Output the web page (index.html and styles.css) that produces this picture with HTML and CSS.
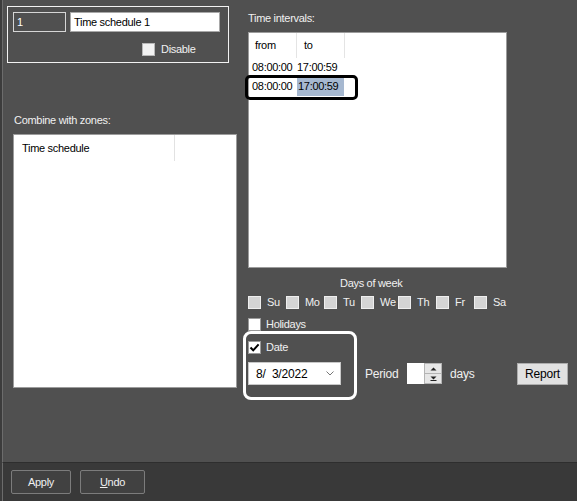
FILE: index.html
```html
<!DOCTYPE html>
<html>
<head>
<meta charset="utf-8">
<link rel="stylesheet" href="styles.css">
</head>
<body>
<div class="window">
  <div class="main">
    <div class="left">
      <div class="group">
        <div class="field-row">
          <div class="field id">1</div>
          <div class="field name">Time schedule 1</div>
        </div>
        <div class="check disable-row"><span class="box light"></span><span>Disable</span></div>
      </div>
      <div class="label combine-label">Combine with zones:</div>
      <div class="list zones">
        <div class="head">
          <div class="col zc1">Time schedule</div>
          <div class="col zc2"></div>
        </div>
      </div>
    </div>
    <div class="right">
      <div class="label">Time intervals:</div>
      <div class="list intervals">
        <div class="trow head">
          <div class="cell c1 hd">from</div>
          <div class="cell c2 hd">to</div>
        </div>
        <div class="trow">
          <div class="cell c1">08:00:00</div>
          <div class="cell c2">17:00:59</div>
        </div>
        <div class="trow">
          <div class="cell c1">08:00:00</div>
          <div class="cell c2"><span class="sel">17:00:59</span></div>
        </div>
        <div class="annot-black"></div>
      </div>
      <div class="dow-title">Days of week</div>
      <div class="days">
        <div class="check"><span class="box dis"></span><span>Su</span></div>
        <div class="check"><span class="box dis"></span><span>Mo</span></div>
        <div class="check"><span class="box dis"></span><span>Tu</span></div>
        <div class="check"><span class="box dis"></span><span>We</span></div>
        <div class="check"><span class="box dis"></span><span>Th</span></div>
        <div class="check"><span class="box dis"></span><span>Fr</span></div>
        <div class="check"><span class="box dis"></span><span>Sa</span></div>
      </div>
      <div class="check holidays"><span class="box"></span><span>Holidays</span></div>
      <div class="date-section">
        <div class="check date-check"><span class="box"><svg width="11" height="11" viewBox="0 0 11 11"><path d="M1.5 5.5 L4.2 8.3 L9.6 2.3" fill="none" stroke="#000" stroke-width="2"/></svg></span><span>Date</span></div>
        <div class="controls">
          <div class="picker"><span class="pick-text">8/  3/2022</span><svg class="chev" width="8" height="5" viewBox="0 0 8 5"><path d="M0.5 0.5 L4 4 L7.5 0.5" fill="none" stroke="#777" stroke-width="1"/></svg></div>
          <div class="period">Period</div>
          <div class="spin">
            <div class="spin-input"></div>
            <div class="spin-btns">
              <div class="sbtn"><svg width="7" height="4" viewBox="0 0 7 4"><path d="M0.5 3.5 L3.5 0.5 L6.5 3.5 Z" fill="#222"/></svg></div>
              <div class="sbtn"><svg width="7" height="5" viewBox="0 0 7 5"><path d="M0.5 0.5 L6.5 0.5 L3.5 3.5 Z" fill="#222"/><path d="M0.5 4.5 H6.5" stroke="#222" stroke-width="1"/></svg></div>
            </div>
          </div>
          <div class="days-label">days</div>
          <button class="report">Report</button>
        </div>
        <div class="annot-white"></div>
      </div>
    </div>
  </div>
  <div class="footer">
    <button class="fbtn apply">Apply</button>
    <button class="fbtn undo"><u>U</u>ndo</button>
  </div>
</div>
</body>
</html>
```
FILE: styles.css
```css
* { box-sizing: border-box; }
html, body { margin: 0; padding: 0; }
body {
  width: 577px;
  height: 501px;
  overflow: hidden;
  background: #505050;
  color: #f0f0f0;
  font-family: "Liberation Sans", Arial, sans-serif;
  font-size: 11px;
  letter-spacing: -0.3px;
}
.window {
  height: 501px;
  display: flex;
  flex-direction: column;
  border-left: 2px solid #3c3c3c;
}
.main {
  height: 463px;
  display: flex;
  background: #505050;
  border-left: 1px solid #6c6c6c;
  border-bottom: 1px solid #2e2e2e;
}
.left {
  width: 241px;
  padding: 6px 0 0 4px;
}
.group {
  width: 222px;
  height: 57px;
  border: 1px solid #f2f2f2;
  padding: 5px 0 0 5px;
}
.field-row { display: flex; gap: 4px; }
.field {
  height: 20px;
  line-height: 18px;
  padding-left: 3px;
}
.field.id {
  width: 53px;
  border: 1px solid #d6d6d6;
  background: #505050;
  color: #fff;
}
.field.name {
  width: 150px;
  border: 1px solid #a8a8a8;
  background: #fff;
  color: #000;
}
.check {
  display: flex;
  align-items: center;
  gap: 6px;
  height: 13px;
  line-height: 13px;
}
.box {
  width: 13px;
  height: 13px;
  flex: none;
  background: #fff;
  border: 1px solid #9a9a9a;
  display: flex;
  align-items: center;
  justify-content: center;
}
.box.light { background: #f2f2f2; border-color: #b8b8b8; }
.box.dis { background: #d4d4d4; border-color: #eeeeee; }
.disable-row { margin-top: 11px; padding-left: 129px; }
.label { line-height: 14px; }
.combine-label { margin: 50px 0 0 7px; }
.list {
  background: #fff;
  border: 1px solid #9c9c9c;
  color: #000;
}
.zones {
  margin: 7px 0 0 6px;
  width: 224px;
  height: 254px;
}
.zones .head { display: flex; height: 26px; }
.zones .col { line-height: 26px; }
.zc1 { width: 161px; padding-left: 8px; border-right: 1px solid #e2e2e2; }
.right {
  flex: 1;
  padding: 11px 0 0 4px;
}
.intervals {
  position: relative;
  margin-top: 7px;
  width: 259px;
  height: 236px;
}
.trow { display: flex; height: 19px; }
.trow.head { height: 25px; }
.cell { width: 48px; line-height: 19px; white-space: nowrap; }
.cell.c1 { padding-left: 3px; }
.cell.c2 { padding-left: 0; }
.cell.hd { line-height: 25px; border-right: 1px solid #e4e4e4; }
.cell.c1.hd { padding-left: 6px; }
.cell.c2.hd { padding-left: 7px; }
.sel {
  display: block;
  background: #a6b8d0;
  padding-left: 1px;
  width: 47px;
}
.annot-black {
  position: absolute;
  left: -4px;
  top: 42px;
  width: 113px;
  height: 25px;
  border: 3px solid #000;
  border-radius: 5px;
}
.dow-title { margin: 8px 0 0 92px; line-height: 14px; }
.days {
  display: grid;
  grid-template-columns: 38px 38px 37px 37px 38px 38px auto;
  margin-top: 6px;
  height: 13px;
}
.holidays { margin-top: 9px; gap: 5px; }
.date-section { position: relative; margin-top: 10px; }
.date-check { gap: 5px; }
.controls {
  display: flex;
  align-items: center;
  margin-top: 8px;
  height: 23px;
}
.picker {
  width: 93px;
  height: 23px;
  background: #fff;
  color: #000;
  border: 1px solid #c8c8c8;
  display: flex;
  align-items: center;
  justify-content: space-between;
  padding: 0 6px 0 7px;
  font-size: 12px;
  letter-spacing: -0.2px;
}
.pick-text { white-space: pre; }
.period { margin-left: 24px; width: 42px; font-size: 12px; letter-spacing: -0.2px; }
.spin {
  width: 35px;
  height: 21px;
  display: flex;
  background: #fff;
}
.spin-input { width: 17px; height: 21px; }
.spin-btns {
  width: 18px;
  display: flex;
  flex-direction: column;
  border: 1px solid #b4b4b4;
}
.sbtn {
  flex: 1;
  background: #e6e6e6;
  display: flex;
  align-items: center;
  justify-content: center;
}
.sbtn + .sbtn { border-top: 1px solid #b4b4b4; }
.days-label { margin-left: 8px; width: 67px; font-size: 12px; letter-spacing: -0.2px; }
.report {
  width: 51px;
  height: 22px;
  margin: 0;
  padding: 0;
  background: #e1e1e1;
  border: 1px solid #adadad;
  color: #000;
  font: inherit;
  font-size: 12px;
  letter-spacing: -0.2px;
}
.annot-white {
  position: absolute;
  left: -5px;
  top: -10px;
  width: 114px;
  height: 69px;
  border: 3px solid #fff;
  border-radius: 8px;
}
.footer {
  height: 38px;
  background: #393939;
  border-left: 1px solid #6c6c6c;
  display: flex;
  align-items: flex-start;
  gap: 9px;
  padding: 7px 0 0 8px;
}
.fbtn {
  height: 24px;
  margin: 0;
  padding: 0;
  background: #414141;
  border: 1px solid #7c7c7c;
  border-radius: 2px;
  color: #f0f0f0;
  font: inherit;
  letter-spacing: inherit;
}
.apply { width: 60px; }
.undo { width: 65px; }
```
